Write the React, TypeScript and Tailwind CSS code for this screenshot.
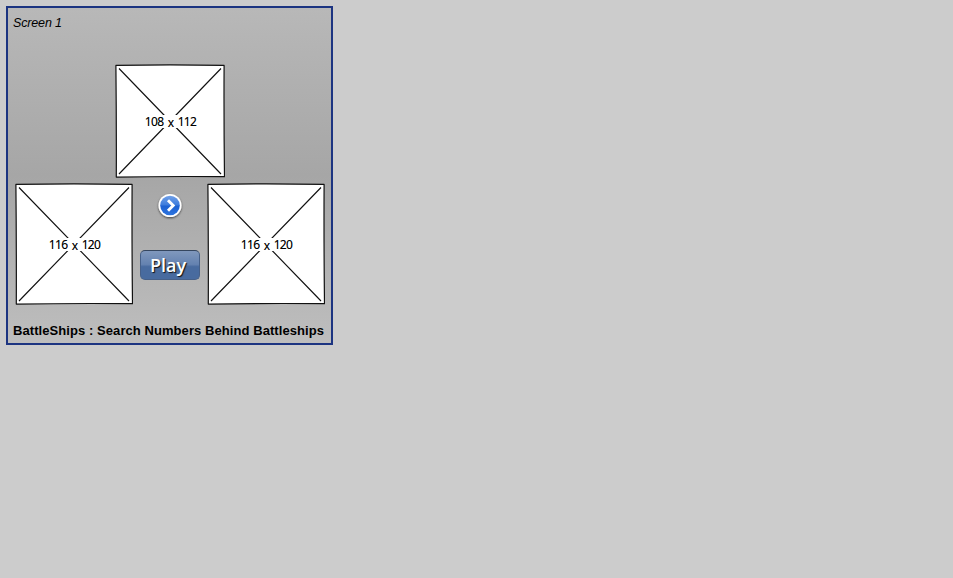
type PlaceholderProps = { width: number; height: number };

function Placeholder({ width: w, height: h }: PlaceholderProps) {
  const r = w + 1.5;
  const b = h + 1.5;
  const cx = w / 2 + 1;
  const cy = h / 2 + 1;
  return (
    <div className="grid shrink-0 place-items-center">
      <svg className="col-start-1 row-start-1 block" width={w + 2} height={h + 2} fill="none" stroke="#111">
        <path
          d={`M0.9 1.4 Q${cx} 0.4 ${r - 0.4} 1.4 Q${w + 0.8} ${cy} ${r} ${b - 0.8} Q${cx} ${h + 0.2} 1.3 ${b - 0.4} Q1.5 ${cy} 0.9 1.4Z`}
          fill="white"
          strokeWidth="1.2"
          strokeLinejoin="round"
        />
        <path d={`M4 4.5 L${w - 2} ${h - 2} M${w - 2} 4.5 L4 ${h - 2}`} strokeWidth="1.15" />
      </svg>
      <span className="z-10 col-start-1 row-start-1 h-[13px] whitespace-nowrap bg-white pl-px font-['Noto_Sans',sans-serif] text-[12px] leading-[13px] tracking-[-0.7px] text-black [text-shadow:0_0_0.3px_#0006] [word-spacing:1.9px]">
        {w} <span className="relative top-px">x</span> {h}
      </span>
    </div>
  );
}

function ArrowIcon() {
  return (
    <svg width="28" height="28" viewBox="0 0 28 28" className="block">
      <defs>
        <linearGradient id="disc" x1="0" y1="0" x2="0" y2="1">
          <stop offset="0" stopColor="#70a0e8" />
          <stop offset="0.48" stopColor="#3c7bdc" />
          <stop offset="0.52" stopColor="#1c60d1" />
          <stop offset="1" stopColor="#2d74df" />
        </linearGradient>
        <filter id="shade" x="-20%" y="-20%" width="140%" height="150%">
          <feDropShadow dx="0" dy="1" stdDeviation="0.9" floodOpacity="0.65" />
        </filter>
      </defs>
      <circle cx="14" cy="13.5" r="11.5" fill="white" filter="url(#shade)" />
      <circle cx="14" cy="13.5" r="9.8" fill="url(#disc)" />
      <path d="M12 8.3 L17.2 13.5 L12 18.7" fill="none" stroke="white" strokeWidth="2.9" />
    </svg>
  );
}

export default function App() {
  return (
    <main className="h-screen w-screen overflow-hidden bg-[#cccccc] p-1.5">
      <section className="flex h-[339px] w-[327px] flex-col border-2 border-[#1c3481] bg-linear-to-b from-[#b8b8b8] via-[#a6a6a6] to-[#bebebe] font-['Liberation_Sans',sans-serif] text-black">
        <h1 className="h-14 pl-[5px] pt-[7px] text-[12.5px] italic leading-4 tracking-[-0.15px]">Screen 1</h1>
        <div className="flex pl-[107px]">
          <Placeholder width={108} height={112} />
        </div>
        <div className="mt-[5px] flex pl-[7px]">
          <Placeholder width={116} height={120} />
          <div className="flex w-[74px] flex-col items-center pt-[9px]">
            <ArrowIcon />
            <button className="mt-[30px] h-[30px] w-[60px] rounded-[5px] border border-[#466088] border-t-[#35465f] bg-linear-to-b from-[#8098bd] from-0% via-[#6482b0] via-48% to-[#486b9f] to-56% pr-1 font-['Open_Sans',sans-serif] text-[18px] font-semibold leading-[29px] text-white [text-shadow:1px_1px_1px_#111]">
              Play
            </button>
          </div>
          <Placeholder width={116} height={120} />
        </div>
        <p className="whitespace-nowrap pl-[5px] pt-[18px] text-[13px] font-bold leading-4 tracking-[0.07px]">
          BattleShips : Search Numbers Behind Battleships
        </p>
      </section>
    </main>
  );
}
